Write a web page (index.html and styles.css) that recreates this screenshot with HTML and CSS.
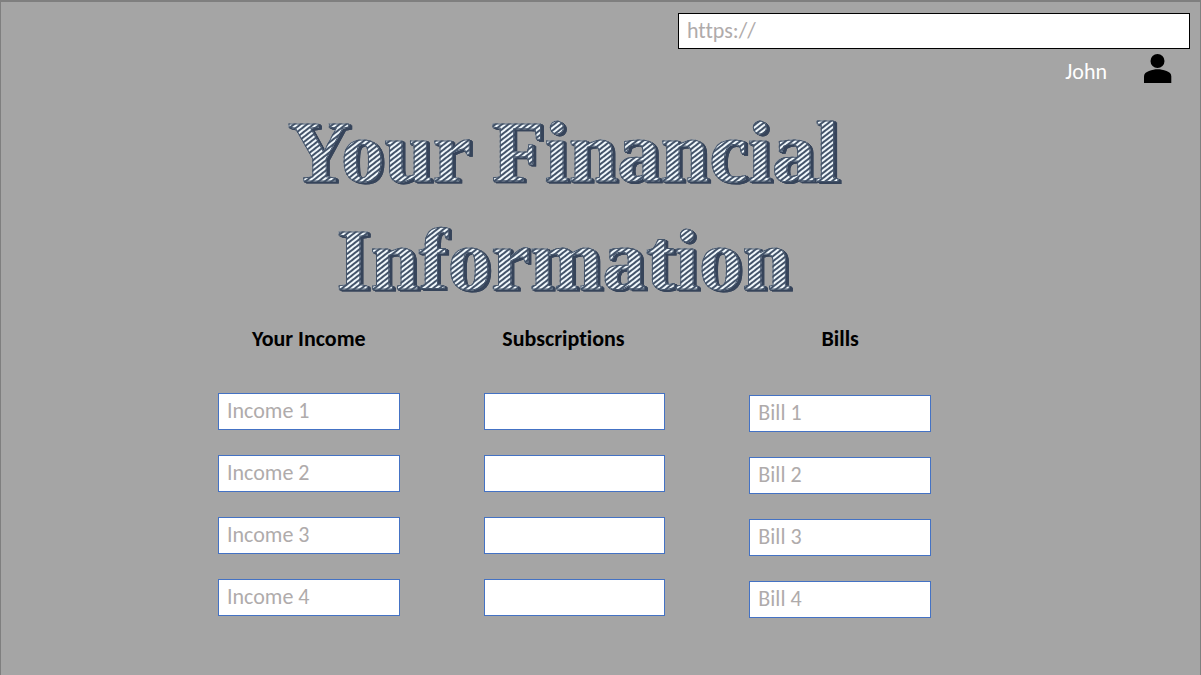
FILE: index.html
```html
<!DOCTYPE html>
<html lang="en">
<head>
<meta charset="utf-8">
<meta name="viewport" content="width=device-width, initial-scale=1">
<title>Your Financial Information</title>
<link rel="stylesheet" href="styles.css">
</head>
<body>
<div class="page">
  <header class="topbar">
    <input class="address" type="text" placeholder="https://" aria-label="Address">
    <div class="user">
      <span class="user-name">John</span>
      <svg class="avatar" viewBox="0 0 28 30" aria-hidden="true"><circle cx="13.500" cy="7" r="7"/><path d="M0 29V22.500C0 19.500 2 18.200 5 17C8 15.800 11 15.300 13.600 15.300S19.500 15.800 22.500 17C25.500 18.200 27.300 19.500 27.300 22.500V29Z"/></svg>
    </div>
  </header>
  <h1 class="title"><span class="title-text">Your Financial<br>Information</span></h1>
  <main class="columns">
    <section class="column">
      <h2 class="heading">Your Income</h2>
      <div class="fields">
        <input class="field" type="text" placeholder="Income 1" aria-label="Income 1">
        <input class="field" type="text" placeholder="Income 2" aria-label="Income 2">
        <input class="field" type="text" placeholder="Income 3" aria-label="Income 3">
        <input class="field" type="text" placeholder="Income 4" aria-label="Income 4">
      </div>
    </section>
    <section class="column subscriptions">
      <h2 class="heading">Subscriptions</h2>
      <div class="fields">
        <input class="field" type="text" aria-label="Subscription 1">
        <input class="field" type="text" aria-label="Subscription 2">
        <input class="field" type="text" aria-label="Subscription 3">
        <input class="field" type="text" aria-label="Subscription 4">
      </div>
    </section>
    <section class="column bills">
      <h2 class="heading">Bills</h2>
      <div class="fields">
        <input class="field" type="text" placeholder="Bill 1" aria-label="Bill 1">
        <input class="field" type="text" placeholder="Bill 2" aria-label="Bill 2">
        <input class="field" type="text" placeholder="Bill 3" aria-label="Bill 3">
        <input class="field" type="text" placeholder="Bill 4" aria-label="Bill 4">
      </div>
    </section>
  </main>
</div>
</body>
</html>
```
FILE: styles.css
```css
* {
  box-sizing: border-box;
}

body {
  margin: 0;
  background: #a5a5a5;
  font-family: Carlito, Lato, "Liberation Sans", sans-serif;
  font-size: 22px;
  line-height: 24px;
  font-variant-ligatures: none;
}

.page {
  min-height: 100vh;
  border: 1px solid #7f7f7f;
  border-top: 2px solid #7f7f7f;
  border-bottom: 0;
}

.topbar {
  display: flex;
  flex-direction: column;
  align-items: flex-end;
  padding: 11px 10px 0;
}

input {
  font: inherit;
  font-variant-ligatures: none;
  color: #000;
  background: #fff;
  border-radius: 0;
  padding: 0 8px 2px;
}

input::placeholder {
  color: #afabab;
  opacity: 1;
}

.address {
  width: 512px;
  max-width: 100%;
  height: 36px;
  border: 1px solid #000;
}

.user {
  display: flex;
  align-items: center;
  gap: 37px;
  padding: 5px 18px 0 0;
  color: #fff;
}

.user-name {
  padding-top: 6px;
}

.avatar {
  width: 28px;
  height: 30px;
  fill: #000;
}

.title {
  margin: 14px 74px 0 0;
  text-align: center;
  font-family: "Liberation Serif", serif;
  font-size: 87px;
  line-height: 108px;
  filter: drop-shadow(1px 1px 0 #36445a) drop-shadow(2px 1px 0 #36445a);
}

.title-text {
  color: transparent;
  background: repeating-linear-gradient(142deg, #44546a 0 1px, #f0f7fb 2px 3px, #44546a 4px);
  -webkit-background-clip: text;
  background-clip: text;
  -webkit-text-stroke: 1px #44546a;
}

.columns {
  display: grid;
  grid-template-columns: repeat(3, 1fr);
  gap: 84px;
  padding: 13px 269px 40px 217px;
}

.heading {
  margin: 0;
  text-align: center;
  font-size: 22px;
  line-height: 24px;
}

.subscriptions .heading {
  padding-right: 22px;
}

.fields {
  display: grid;
  gap: 25px;
  padding-top: 42px;
}

.bills .fields {
  padding-top: 44px;
}

.field {
  width: 100%;
  height: 37px;
  border: 1px solid #4472c4;
}
```
